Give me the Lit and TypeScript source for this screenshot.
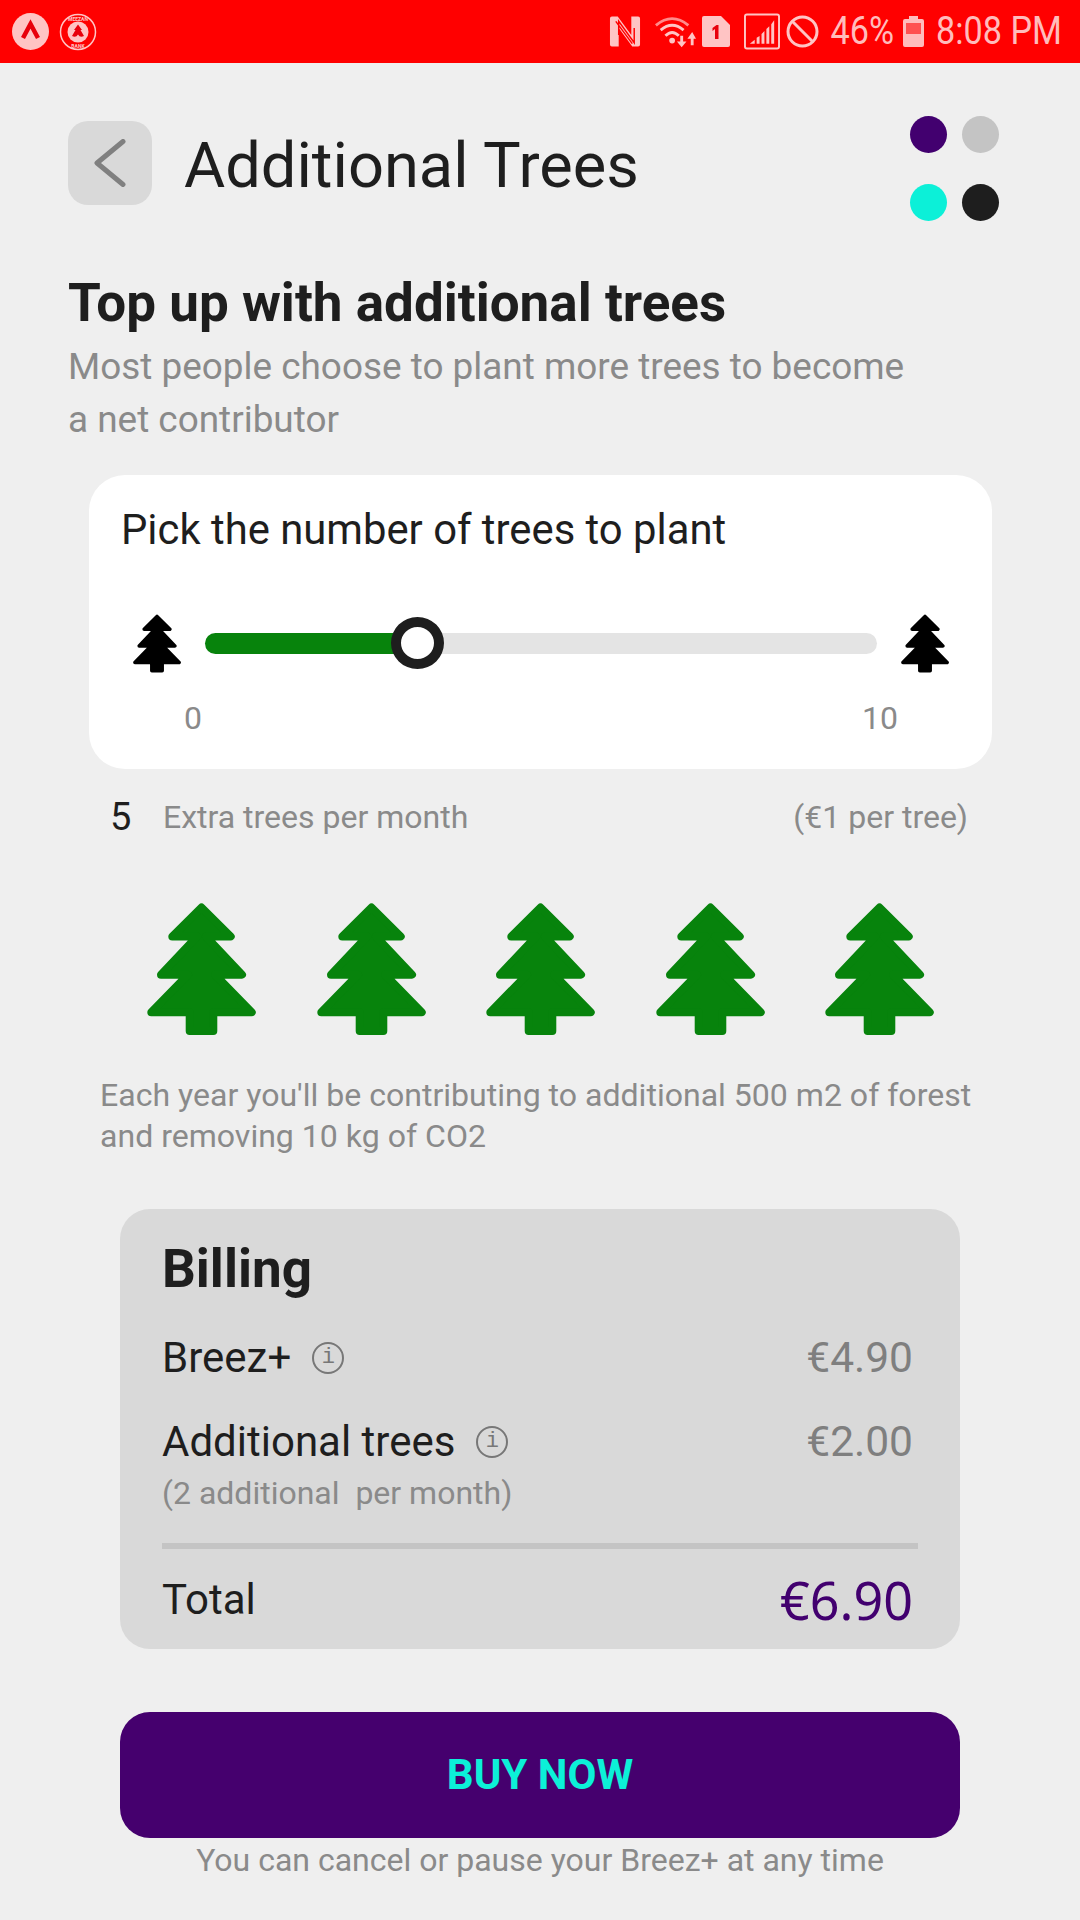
import { LitElement, html, css } from "lit";
import { customElement } from "lit/decorators.js";

const treePts = "54.5,4.5 83.7,33.5 58.9,33.5 95,71.7 68.1,71.7 104.7,109.3 66.3,109.3 66.3,128 42.7,128 42.7,109.3 4.3,109.3 40.9,71.7 14,71.7 50.1,33.5 25.3,33.5";
const tree = (cls: string) => html`<svg class=${cls} viewBox="0 0 109 132"><polygon points=${treePts} fill="currentColor" stroke="currentColor" stroke-width="8" stroke-linejoin="round"></polygon></svg>`;
const info = () => html`<span class="info">i</span>`;

@customElement("app-root")
export class AppRoot extends LitElement {
  static styles = css`
    :host { display: block; width: 1080px; height: 1920px; overflow: hidden; background: #efefef; font-family: Roboto, sans-serif; color: #1e1e1e; }
    .status { height: 63px; background: #f00; display: flex; align-items: center; color: #ffbcbc; position: relative; }
    .status svg { display: block; flex: none; }
    .sl { display: flex; gap: 10px; margin-left: 12px; }
    .sr { margin-left: auto; display: flex; align-items: center; height: 63px; padding-right: 18px; }
    .stxt { font-size: 38px; line-height: 63px; transform: scaleX(.9); white-space: nowrap; display: block; }
    .pct { margin: 0 -3px 0 5px; }
    .time { margin: 0 -7px 0 5px; }
    .i-n { margin-right: 13px; }
    .i-w { margin-right: 6px; }
    .i-s { margin-right: 14px; }
    .i-g { margin-right: 6px; }
    .i-b { margin-right: 3px; }
    .i-bat { margin-left: 9px; }
    .head { display: flex; padding: 58px 66px 0 68px; align-items: flex-start; }
    .back { width: 84px; height: 84px; border-radius: 20px; background: #d9d9d9; display: flex; align-items: center; justify-content: center; flex: none; }
    h1 { font-weight: 400; font-size: 63.2px; line-height: 88px; margin: 0 0 0 32px; flex: 1; }
    .dots { display: grid; grid-template-columns: 37px 37px; column-gap: 15px; row-gap: 31px; margin: -5px 15px 0 0; }
    .dot { width: 37px; height: 37px; border-radius: 50%; }
    .intro { padding: 0 68px; margin-top: 52px; }
    h2 { font-size: 53px; line-height: 60px; font-weight: 700; margin: 0; }
    .intro p { margin: 7px 0 0; font-size: 36.9px; line-height: 53px; color: #8a8a8a; width: 850px; }
    .card { margin: 29px 88px 0 89px; height: 294px; box-sizing: border-box; background: #fff; border-radius: 36px; padding: 28px 32px 0; }
    .card h3 { font-size: 41.8px; line-height: 54px; font-weight: 400; margin: 0; }
    .slide { display: flex; align-items: center; margin: 56px 0 0 12px; height: 60px; }
    .stree { width: 48px; height: 59px; color: #000; flex: none; }
    .track { width: 672px; height: 21px; border-radius: 11px; background: #e4e4e4; margin: 0 24px 0 24px; position: relative; flex: none; }
    .fill { height: 100%; border-radius: 11px; background: #07830c; }
    .thumb { position: absolute; width: 53px; height: 52px; box-sizing: border-box; border: 10px solid #1e1e1e; border-radius: 50%; background: #fff; top: -16px; left: 186px; }
    .scale { display: flex; justify-content: space-between; font-size: 32px; line-height: 36px; color: #8a8a8a; margin: 27px 0 0; padding: 0 0 0 63px; width: 777px; box-sizing: border-box; }
    .count { display: flex; align-items: center; margin: 28px 112px 0 110px; height: 40px; font-size: 32px; color: #8a8a8a; }
    .count b { font-weight: 400; font-size: 38px; color: #1e1e1e; width: 53px; }
    .count span:last-child { margin-left: auto; }
    .forest { display: flex; justify-content: space-between; padding: 0 146px 0 147px; margin-top: 66px; }
    .gtree { width: 109px; height: 132px; color: #07830c; flex: none; }
    .note { margin: 40px 60px 0 100px; font-size: 32.05px; line-height: 41px; color: #8a8a8a; }
    .bill { margin: 52px 120px 0; height: 440px; box-sizing: border-box; background: #d9d9d9; border-radius: 30px; padding: 30px 47px 0 42px; }
    .bill h4 { font-size: 53px; line-height: 60px; margin: 0; font-weight: 700; }
    .row { display: flex; justify-content: space-between; align-items: center; font-size: 42px; line-height: 50px; }
    .row .lab { display: flex; align-items: center; gap: 21px; }
    .price { color: #7f7f7f; font-size: 42.5px; }
    .info { width: 32px; height: 32px; box-sizing: border-box; border: 2px solid #777; border-radius: 50%; font: 22px/28px "Liberation Mono", monospace; text-align: center; color: #777; display: block; }
    .sub { font-size: 32px; line-height: 40px; color: #8a8a8a; margin-top: 5px; }
    .rule { height: 6px; background: #c4c4c4; margin: 30px -5px 0 0; }
    .total { margin-top: 26px; }
    .total .price { color: #42006f; font: 52px/50px "Noto Sans", sans-serif; }
    .buy { margin: 63px 120px 0; height: 126px; border-radius: 30px; background: #45006e; color: #0cf0d8; font-size: 42px; line-height: 128px; font-weight: 700; display: flex; align-items: center; justify-content: center; }
    .foot { text-align: center; font-size: 32px; line-height: 44px; color: #8a8a8a; margin-top: 0; }
  `;

  render() {
    return html`
      <div class="status">
        <div class="sl">
          <svg width="37" height="37" viewBox="0 0 37 37"><circle cx="18.5" cy="18.5" r="18.5" fill="#ffc4c4"/><path d="M11 25 L18.5 11 L26 25" fill="none" stroke="#e8000c" stroke-width="4.5"/></svg>
          <svg width="38" height="38" viewBox="0 0 38 38">
            <circle cx="19" cy="19" r="17.5" fill="none" stroke="#ffc4c4" stroke-width="1.5"/>
            <circle cx="19" cy="19" r="10.5" fill="#ffc4c4"/>
            <path d="M19 11.5 L23 17 H21.5 L25 23 Q21 25 19 21.5 Q17 25 13 23 L16.5 17 H15 Z" fill="#e8000c"/>
            <text x="19" y="7.5" font-size="5" font-family="Roboto" font-weight="700" fill="#ffc4c4" text-anchor="middle">MEEZAN</text>
            <text x="19" y="35" font-size="5" font-family="Roboto" font-weight="700" fill="#ffc4c4" text-anchor="middle">BANK</text>
          </svg>
        </div>
        <div class="sr">
          <svg class="i-n" width="32" height="33" viewBox="0 0 33 33"><path d="M3 1 H9 L23 20 V1 H30 Q32 1 32 3 V30 Q32 32 30 32 H24 L10 13 V32 H3 Q1 32 1 30 V3 Q1 1 3 1Z" fill="#ffc4c4"/><path d="M7 6 L24 29 M10 20 L10 6 L26 28 L26 13" fill="none" stroke="#f00" stroke-width="1.5"/></svg>
          <svg class="i-w" width="42" height="32" viewBox="0 0 44 32"><path d="M2 9 Q19 -5 36 9" fill="none" stroke="#ff8a8a" stroke-width="3"/><path d="M7 14 Q19 4 31 14 M12 20 Q19 13 26 20" fill="none" stroke="#ffc4c4" stroke-width="3"/><circle cx="19" cy="25" r="3" fill="#ffc4c4"/><path d="M29 32 L24 26 H27.5 V20 H30.5 V26 H34 Z M40 16 L35 23 H38.5 V30 H41.5 V23 H44 Z" fill="#ffc4c4"/></svg>
          <svg class="i-s" width="28" height="31" viewBox="0 0 28 31"><path d="M2 0 H19 L28 9 V29 Q28 31 26 31 H2 Q0 31 0 29 V2 Q0 0 2 0Z" fill="#ffc4c4"/><path d="M10.5 12 L14.5 9 H16.5 V23 H13 V13 L10.5 15Z" fill="#e8000c"/></svg>
          <svg class="i-g" width="36" height="37" viewBox="0 0 37 37"><rect x="1" y="1" width="35" height="35" rx="2" fill="none" stroke="#ffc4c4" stroke-width="2"/><path d="M6 31 L11 27 V31Z M13 31 V25 L16 23 V31Z M18 31 V21 L21 18 V31Z M23 31 V16 L26 13 V31Z M28 31 V11 L31 7 V31Z" fill="#ffc4c4"/></svg>
          <svg class="i-b" width="33" height="33" viewBox="0 0 33 33"><circle cx="16.5" cy="16.5" r="14.5" fill="none" stroke="#ffc4c4" stroke-width="3"/><path d="M6 6 L27 27" stroke="#ffc4c4" stroke-width="3"/></svg>
          <span class="stxt pct">46%</span>
          <svg class="i-bat" width="21" height="31" viewBox="0 0 21 31"><path d="M6 0 H15 V3 H19 Q21 3 21 5 V29 Q21 31 19 31 H2 Q0 31 0 29 V5 Q0 3 2 3 H6Z" fill="#ffbcbc"/><rect x="3" y="7" width="15" height="11" fill="#ff5050"/></svg>
          <span class="stxt time">8:08 PM</span>
        </div>
      </div>

      <div class="head">
        <div class="back"><svg width="32" height="48" viewBox="0 0 32 48"><path d="M29 2.5 L3 24 L29 45.5" fill="none" stroke="#808080" stroke-width="5" stroke-linecap="round" stroke-linejoin="round"/></svg></div>
        <h1>Additional Trees</h1>
        <div class="dots">
          <div class="dot" style="background:#42006f"></div>
          <div class="dot" style="background:#c4c4c4"></div>
          <div class="dot" style="background:#0cf0d8"></div>
          <div class="dot" style="background:#1e1e1e"></div>
        </div>
      </div>

      <div class="intro">
        <h2>Top up with additional trees</h2>
        <p>Most people choose to plant more trees to become a net contributor</p>
      </div>

      <div class="card">
        <h3>Pick the number of trees to plant</h3>
        <div class="slide">
          ${tree("stree")}
          <div class="track"><div class="fill" style="width:212px"></div><div class="thumb"></div></div>
          ${tree("stree")}
        </div>
        <div class="scale"><span>0</span><span>10</span></div>
      </div>

      <div class="count"><b>5</b><span>Extra trees per month</span><span>(€1 per tree)</span></div>

      <div class="forest">${[1, 2, 3, 4, 5].map(() => tree("gtree"))}</div>

      <div class="note">Each year you'll be contributing to additional 500 m2 of forest and removing 10 kg of CO2</div>

      <div class="bill">
        <h4>Billing</h4>
        <div class="row" style="margin-top:34px"><div class="lab">Breez+ ${info()}</div><span class="price">€4.90</span></div>
        <div class="row" style="margin-top:34px"><div class="lab">Additional trees ${info()}</div><span class="price">€2.00</span></div>
        <div class="sub" style="margin-top:6px">(2 additional&nbsp; per month)</div>
        <div class="rule"></div>
        <div class="row total"><span>Total</span><span class="price">€6.90</span></div>
      </div>

      <div class="buy">BUY NOW</div>
      <div class="foot">You can cancel or pause your Breez+ at any time</div>
    `;
  }
}
